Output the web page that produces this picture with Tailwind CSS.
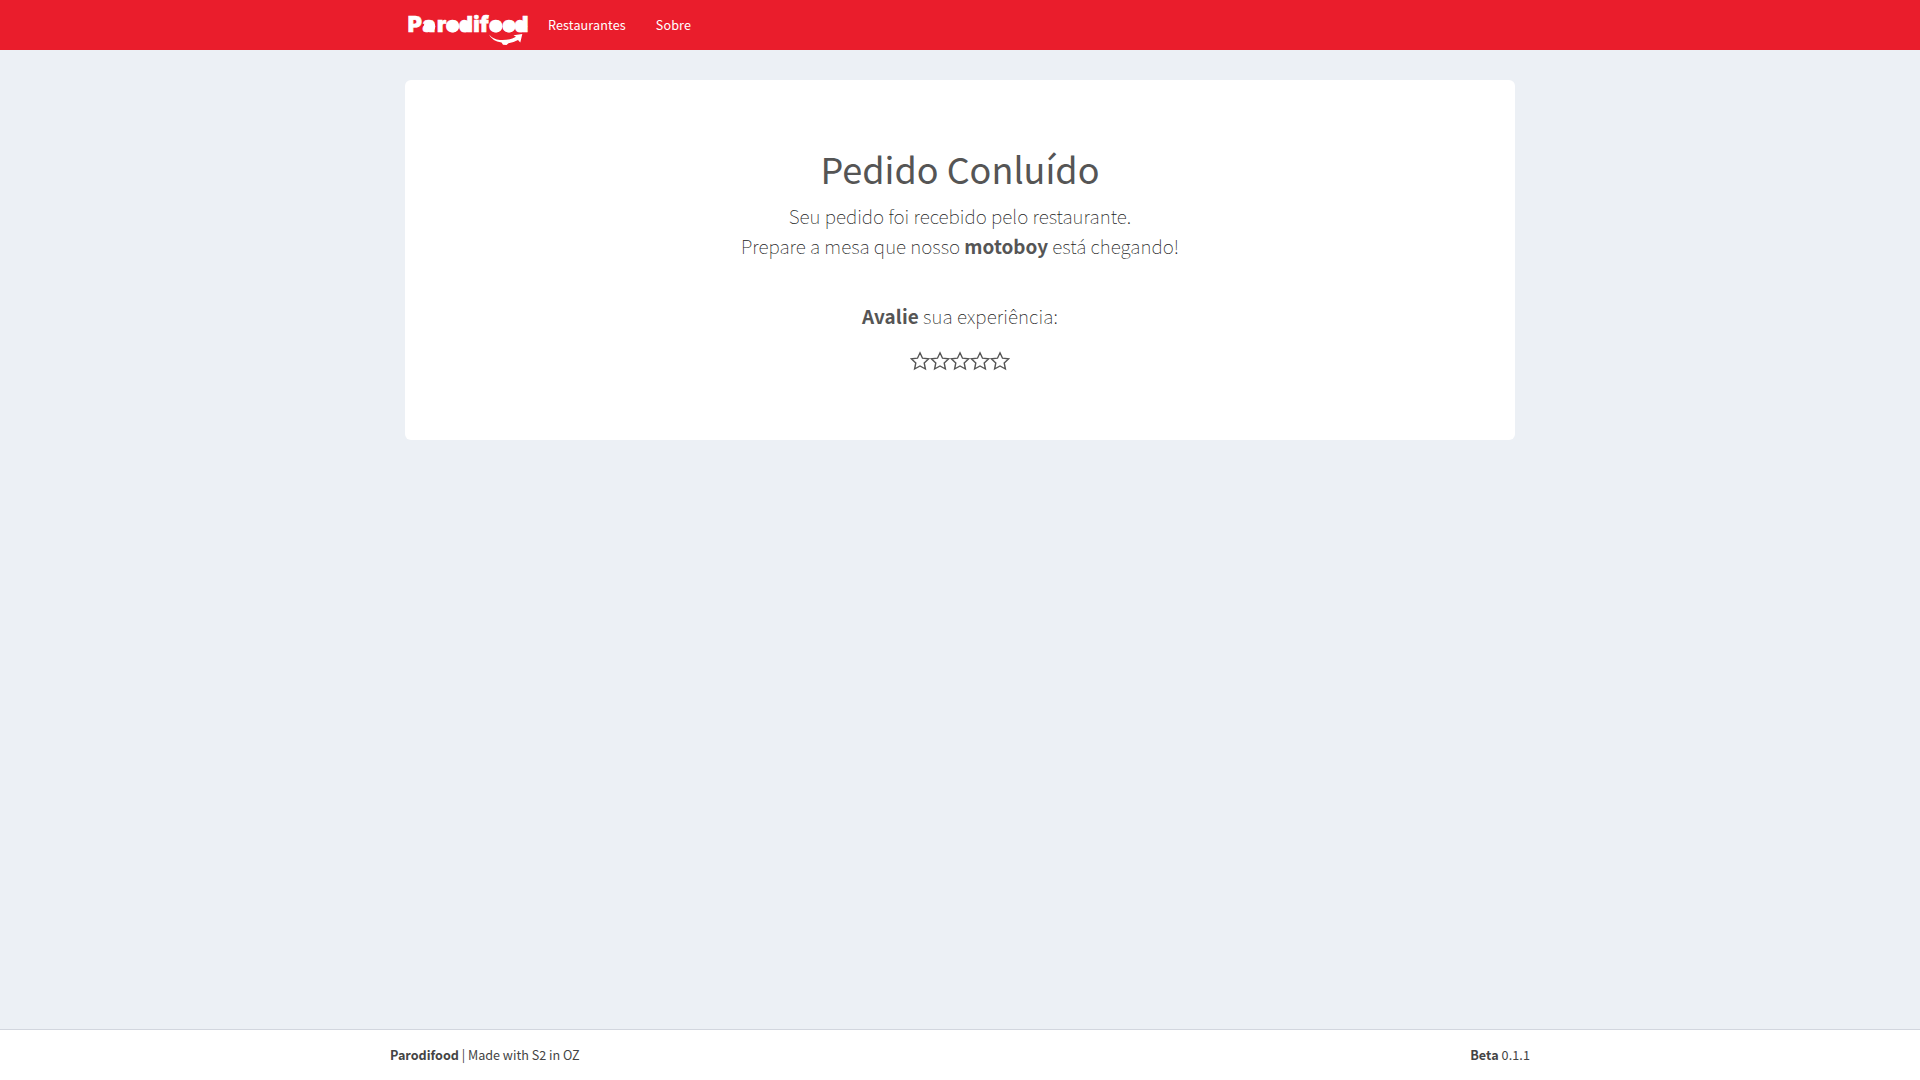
<!DOCTYPE html>
<html lang="pt-BR">
<head>
<meta charset="utf-8">
<title>Parodifood</title>
<script src="https://cdn.jsdelivr.net/npm/@tailwindcss/browser@4"></script>
</head>
<body class="flex h-screen flex-col overflow-hidden bg-[#ecf0f5] font-['Noto_Sans_CJK_JP','Noto_Sans',sans-serif] text-[12.6px] leading-5 text-[#444]">
<header class="h-[50px] shrink-0 bg-[#ea1d2c]">
  <div class="mx-auto flex h-full w-[1110px] items-center text-white">
    <svg class="h-[50px] w-[128px]" viewBox="0 0 128 50" fill="#fff" role="img" aria-label="Parodifood">
      <text x="2.800 17.600 31.900 40.700 54 68.300 74.800 84 97.200 109.500" y="32" font-family="Inter, sans-serif" font-weight="900" font-size="21.500" stroke="#fff" stroke-width="0.6">Parodifood</text>
      <g>
        <circle cx="47.800" cy="26.400" r="6.200"/>
        <circle cx="60.500" cy="26.400" r="6"/>
        <circle cx="91" cy="26.400" r="6.200"/>
        <circle cx="104" cy="26.400" r="6.200"/>
        <circle cx="116.200" cy="26.400" r="6"/>
        <circle cx="24.500" cy="26.400" r="5.800"/>
      </g>
      <path d="M84 34.500 Q88 39.300 95 40 Q105 40.500 111 36.800 L108.500 35.200 L117.300 34 L115.300 42.500 L113 40 Q108 42.800 103.500 43.200 L101.500 45 L98 44.700 L96.500 42.500 Q87 41 84 34.500Z"/>
    </svg>
    <nav class="flex tracking-[0.12px]">
      <a class="px-[15px]">Restaurantes</a>
      <a class="px-[15px]">Sobre</a>
    </nav>
  </div>
</header>
<main class="grow pt-[30px]">
  <section class="mx-auto h-[360px] w-[1110px] rounded-md bg-white pt-[66px] text-center text-[#555]">
    <h1 class="text-[36px] leading-11">Pedido Conluído</h1>
    <p class="mt-[11px] text-[18.9px] font-thin leading-[30px] tracking-[0.03px] text-[#222]">Seu pedido foi recebido pelo restaurante.<br>Prepare a mesa que nosso <strong class="font-bold text-[#555]">motoboy</strong> está chegando!</p>
    <p class="mt-10 text-[18.9px] font-thin leading-[30px] tracking-[0.1px] text-[#222]"><strong class="font-bold text-[#555]">Avalie</strong> sua experiência:</p>
    <div class="mt-5 flex justify-center">
      <svg class="h-5 w-[100px]" viewBox="0 0 100 20" fill="none" stroke="#555" stroke-width="1.4">
        <defs><path id="star" d="M10 1.800 L12.500 7.200 L18.700 7.800 L14.200 12 L15.400 18 L10 15 L4.600 18 L5.800 12 L1.300 7.800 L7.500 7.200Z"/></defs>
        <use href="#star"/><use href="#star" x="20"/><use href="#star" x="40"/><use href="#star" x="60"/><use href="#star" x="80"/>
      </svg>
    </div>
  </section>
</main>
<footer class="h-[51px] shrink-0 border-t border-[#d2d6de] bg-white">
  <div class="mx-auto flex w-[1140px] justify-between pt-[15px]">
    <p><strong class="font-bold">Parodifood</strong> | Made with S2 in OZ</p>
    <p class="tracking-[0.08px]"><strong class="font-bold">Beta</strong> 0.1.1</p>
  </div>
</footer>
</body>
</html>
